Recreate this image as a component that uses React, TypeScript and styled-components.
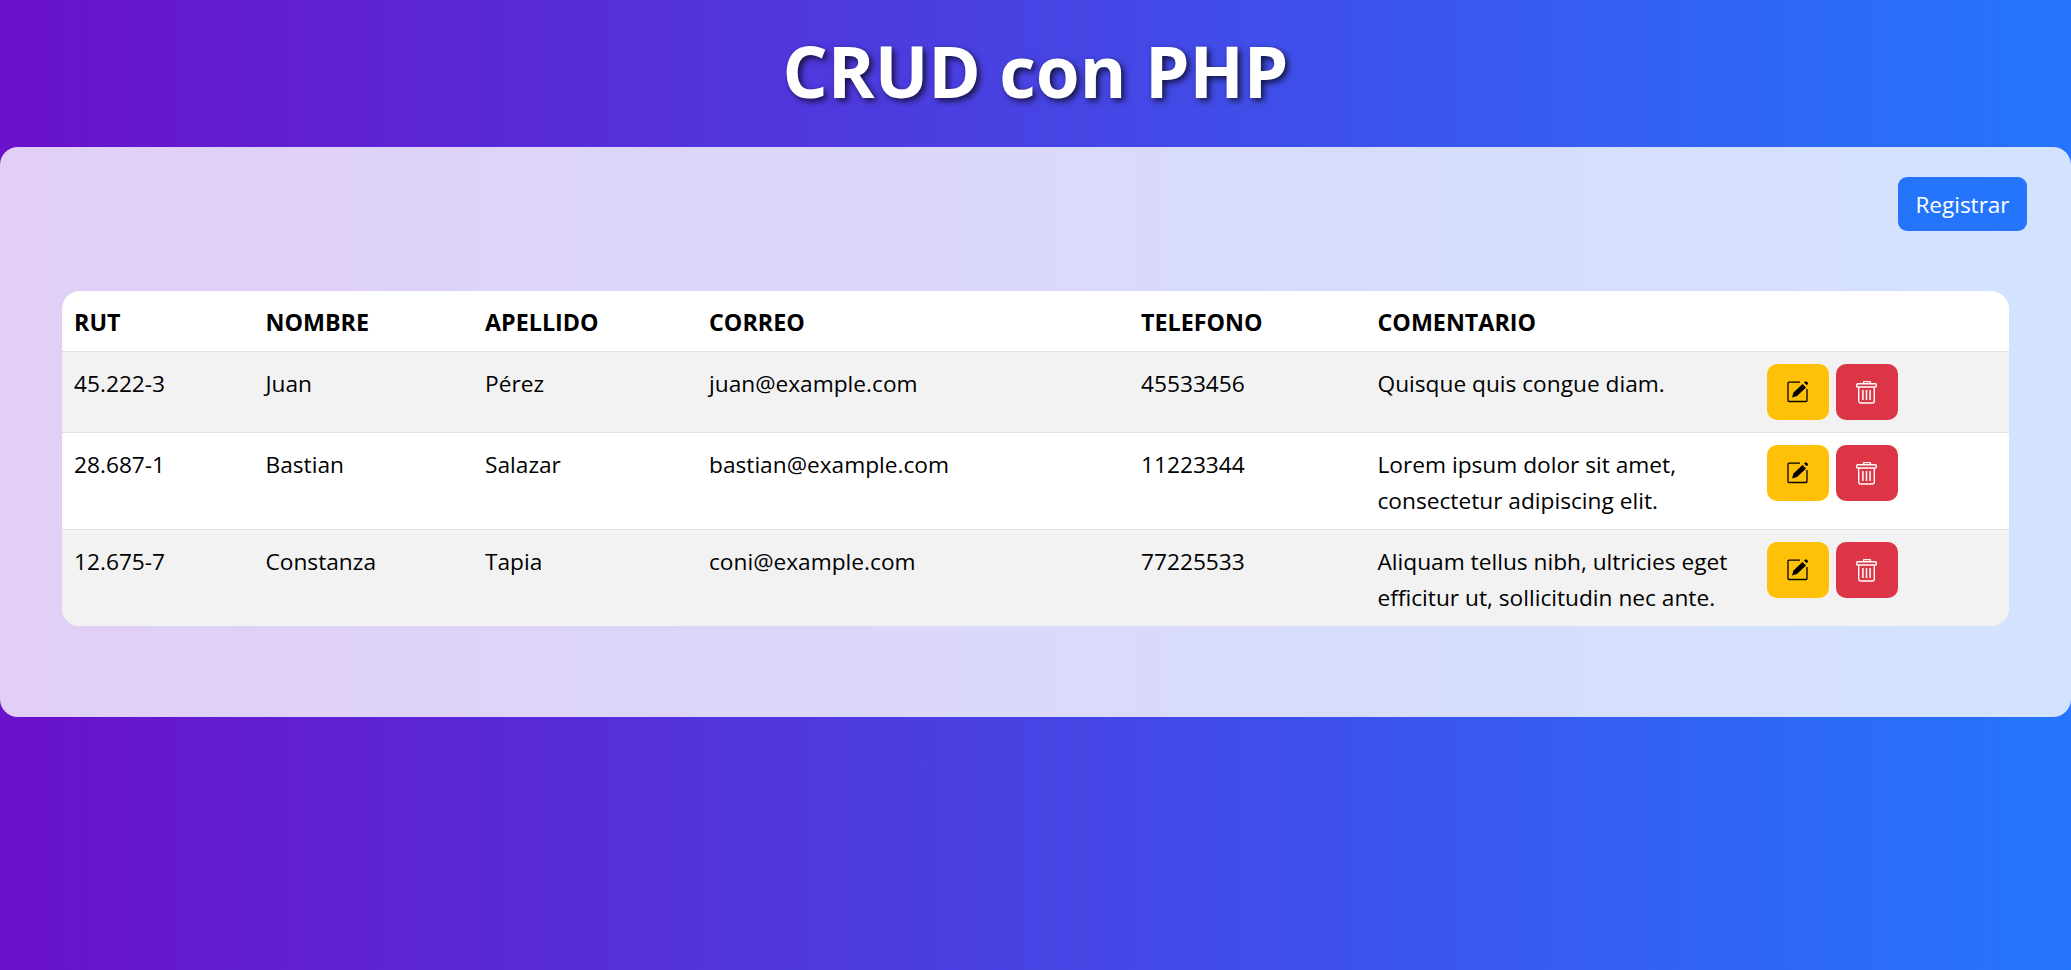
import React from "react";
import styled, { createGlobalStyle } from "styled-components";

const GlobalStyle = createGlobalStyle`
  html, body {
    margin: 0;
    min-height: 100vh;
  }
  body {
    background: linear-gradient(90deg, #6a11cb, #2575fc);
    font-family: "Open Sans", "Noto Sans", sans-serif;
    color: #000;
  }
`;

const Title = styled.h1`
  margin: 0;
  height: 141px;
  padding-bottom: 6px;
  display: flex;
  align-items: center;
  justify-content: center;
  color: #fff;
  font-size: 71px;
  font-weight: 700;
  text-shadow: 3px 3px 6px rgba(0, 0, 0, 0.7);
`;

const Panel = styled.main`
  background: rgba(255, 255, 255, 0.8);
  border-radius: 18px;
  padding: 30px 44px 91px;
`;

const Toolbar = styled.div`
  display: flex;
  justify-content: flex-end;
`;

const RegisterButton = styled.button`
  width: 129px;
  height: 54px;
  background: #2575fc;
  color: #fff;
  border: none;
  border-radius: 9px;
  font: inherit;
  font-size: 22.5px;
`;

const TableCard = styled.div`
  margin: 60px 18px 0;
  background: #fff;
  border-radius: 18px;
  overflow: hidden;
`;

const Table = styled.table`
  width: 100%;
  table-layout: fixed;
  border-collapse: collapse;
  font-size: 22.7px;
  line-height: 36px;
`;

const Col = styled.col<{ $w: number }>`
  width: ${(p) => p.$w}px;
`;

const HeadCell = styled.th`
  padding: 13px 12px 11px;
  text-align: left;
  font-size: 23.3px;
  font-weight: 700;
  border-bottom: 1.5px solid #dee2e6;
`;

const Row = styled.tr<{ $striped: boolean }>`
  background: ${(p) => (p.$striped ? "#f2f2f2" : "#fff")};
  border-bottom: 1.5px solid #dee2e6;
  &:last-child {
    border-bottom: none;
  }
`;

const Cell = styled.td`
  padding: 14px 12px 10px;
  vertical-align: top;
`;

const ActionCell = styled.td`
  padding: 12px;
  vertical-align: top;
`;

const Actions = styled.div`
  display: flex;
  gap: 7px;
`;

const IconButton = styled.button<{ $bg: string; $fg: string }>`
  width: 62px;
  height: 56px;
  padding: 0;
  border: none;
  border-radius: 10px;
  background: ${(p) => p.$bg};
  color: ${(p) => p.$fg};
  display: flex;
  align-items: center;
  justify-content: center;
`;

const EditIcon = () => (
  <svg width="22" height="22" viewBox="0 0 22 22" fill="none">
    <path
      d="M13 1.2H2a1 1 0 0 0-1 1V19.5a1 1 0 0 0 1 1H19a1 1 0 0 0 1-1V8"
      stroke="currentColor"
      strokeWidth="1.3"
    />
    <path d="M5 16.5 6.5 11.5 15.5 3 19 6.5 10 15Z" fill="currentColor" />
    <path d="M17 1.5 18.3.4a.9.9 0 0 1 1.2 0L20.8 1.7a.9.9 0 0 1 0 1.2L19.8 4.2Z" fill="currentColor" />
  </svg>
);

const TrashIcon = () => (
  <svg width="22" height="23" viewBox="0 0 22 23" fill="none" stroke="currentColor">
    <path d="M7.5 2.6V1.4a.7.7 0 0 1 .7-.7h5.6a.7.7 0 0 1 .7.7V2.6" strokeWidth="1.3" />
    <rect x="0.7" y="2.8" width="19.6" height="3.2" rx="1" strokeWidth="1.4" />
    <path d="M2.7 6V20a2 2 0 0 0 2 2H16.3a2 2 0 0 0 2-2V6" strokeWidth="1.4" />
    <path d="M6.9 9V19M10.5 9V19M14.1 9V19" strokeWidth="1.5" />
  </svg>
);

const widths = [191.5, 219.5, 224, 432, 236.5, 389.5, 254];
const heads = ["RUT", "NOMBRE", "APELLIDO", "CORREO", "TELEFONO", "COMENTARIO", ""];

const people = [
  ["45.222-3", "Juan", "Pérez", "juan@example.com", "45533456", "Quisque quis congue diam."],
  ["28.687-1", "Bastian", "Salazar", "bastian@example.com", "11223344", "Lorem ipsum dolor sit amet, consectetur adipiscing elit."],
  ["12.675-7", "Constanza", "Tapia", "coni@example.com", "77225533", "Aliquam tellus nibh, ultricies eget efficitur ut, sollicitudin nec ante."],
];

export default function App() {
  return (
    <>
      <GlobalStyle />
      <Title>CRUD con PHP</Title>
      <Panel>
        <Toolbar>
          <RegisterButton>Registrar</RegisterButton>
        </Toolbar>
        <TableCard>
          <Table>
            <colgroup>
              {widths.map((w, i) => (
                <Col key={i} $w={w} />
              ))}
            </colgroup>
            <thead>
              <tr>
                {heads.map((h, i) => (
                  <HeadCell key={i}>{h}</HeadCell>
                ))}
              </tr>
            </thead>
            <tbody>
              {people.map((person, i) => (
                <Row key={person[0]} $striped={i % 2 === 0}>
                  {person.map((value, j) => (
                    <Cell key={j}>{value}</Cell>
                  ))}
                  <ActionCell>
                    <Actions>
                      <IconButton $bg="#ffc107" $fg="#000">
                        <EditIcon />
                      </IconButton>
                      <IconButton $bg="#dc3545" $fg="#fff">
                        <TrashIcon />
                      </IconButton>
                    </Actions>
                  </ActionCell>
                </Row>
              ))}
            </tbody>
          </Table>
        </TableCard>
      </Panel>
    </>
  );
}
